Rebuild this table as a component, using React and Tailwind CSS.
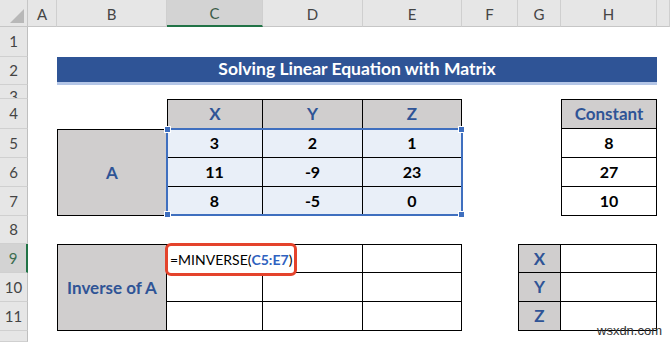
import React from "react";

const colHeads = ["A", "B", "C", "D", "E", "F", "G", "H", ""];
const rowHeads = ["1", "2", "3", "4", "5", "6", "7", "8", "9", "10", "11", ""];

const colStart = ["col-start-2", "col-start-3", "col-start-4", "col-start-5", "col-start-6", "col-start-7", "col-start-8", "col-start-9", "col-start-10"];
const rowStart = ["row-start-2", "row-start-3", "row-start-4", "row-start-5", "row-start-6", "row-start-7", "row-start-8", "row-start-9", "row-start-10", "row-start-11", "row-start-12", "row-start-13"];

const matrix = [
  ["3", "2", "1"],
  ["11", "-9", "23"],
  ["8", "-5", "0"],
];
const constants = ["8", "27", "10"];

const Handle = ({ className }) => (
  <span className={`absolute w-[7px] h-[7px] bg-[#3f6fbf] border border-white ${className}`} />
);

const App = () => {
  return (
    <div className="w-[670px] h-[342px] overflow-hidden bg-white font-['Lato','Noto_Sans',sans-serif]">
      <div className="grid grid-cols-[28px_29px_110px_96px_100px_99px_56px_43px_96px_13px] grid-rows-[27px_30px_28px_14px_30px_29px_29px_29px_28px_29px_29px_29px_11px] w-[670px] h-[342px]">
        {/* corner */}
        <div className="col-start-1 row-start-1 bg-[#e6e6e6] border-r border-b border-[#c6c6c6] flex items-end justify-end p-[3px]">
          <svg width="14" height="14" viewBox="0 0 14 14">
            <polygon points="14,0 14,14 0,14" fill="#b8b8b8" />
          </svg>
        </div>

        {/* column headers */}
        {colHeads.map((c, i) => (
          <div
            key={c + i}
            className={`${colStart[i]} row-start-1 flex items-center justify-center text-[15px] pt-[2px] ${
              c === "C"
                ? "bg-[#d3d3d3] border-b-2 border-[#217346] text-[#3c5c48]"
                : "bg-[#e6e6e6] border-b border-[#c6c6c6] text-[#444]"
            } border-r border-r-[#cfcfcf]`}
          >
            {c}
          </div>
        ))}

        {/* row headers */}
        {rowHeads.map((r, i) => (
          <div
            key={"r" + i}
            className={`col-start-1 ${rowStart[i]} flex justify-center overflow-hidden text-[15px] border-b border-[#d0d0d0] ${
              r === "3" ? "items-end leading-[14px] h-[14px]" : "items-center"
            } ${
              r === "9"
                ? "bg-[#d3d3d3] border-r-2 border-r-[#217346] text-[#3c6e50]"
                : "bg-[#e6e6e6] border-r border-r-[#bfbfbf] text-[#444]"
            }`}
          >
            <span className={r === "3" ? "translate-y-[5px]" : ""}>{r}</span>
          </div>
        ))}

        {/* title */}
        <div className="col-start-3 col-span-7 row-start-3 bg-[#2f5496] border-b-[3px] border-[#b4c6e7] flex items-center justify-center text-white font-bold text-[17.5px]">
          Solving Linear Equation with Matrix
        </div>

        {/* matrix headers */}
        {["X", "Y", "Z"].map((h, i) => (
          <div
            key={h}
            className={`${colStart[2 + i]} row-start-5 bg-[#d0cece] border-t border-r border-b border-black ${i === 0 ? "border-l" : ""} flex items-center justify-center text-[#2f5496] font-bold text-[17px]`}
          >
            {h}
          </div>
        ))}

        {/* A block */}
        <div className="col-start-3 row-start-6 row-span-3 bg-[#d0cece] border border-black flex items-center justify-center text-[#2f5496] font-bold text-[17px]">
          A
        </div>

        {/* matrix data */}
        {matrix.map((row, ri) =>
          row.map((v, ci) => (
            <div
              key={ri + "-" + ci}
              className={`${colStart[2 + ci]} ${rowStart[4 + ri]} bg-[#e9eff8] border-r border-b border-black flex items-center justify-center font-bold text-[16px] text-black`}
            >
              {v}
            </div>
          ))
        )}

        {/* selection */}
        <div className="col-start-4 col-span-3 row-start-6 row-span-3 relative -mt-px -ml-px -mr-px border-2 border-[#3f6fbf]">
          <Handle className="-top-[4px] -left-[4px]" />
          <Handle className="-top-[4px] -right-[4px]" />
          <Handle className="-bottom-[4px] -left-[4px]" />
          <Handle className="-bottom-[4px] -right-[4px]" />
        </div>

        {/* constant table */}
        <div className="col-start-9 row-start-5 bg-[#d0cece] border border-black flex items-center justify-center text-[#2f5496] font-bold text-[17px]">
          Constant
        </div>
        {constants.map((v, i) => (
          <div
            key={"c" + i}
            className={`col-start-9 ${rowStart[4 + i]} border-l border-r border-b border-black flex items-center justify-center font-bold text-[16px] text-black`}
          >
            {v}
          </div>
        ))}

        {/* inverse block */}
        <div className="col-start-3 row-start-10 row-span-3 bg-[#d0cece] border border-black flex items-center justify-center text-[#2f5496] font-bold text-[17px]">
          Inverse of A
        </div>
        {[0, 1, 2].map((ri) =>
          [0, 1, 2].map((ci) => (
            <div
              key={"i" + ri + ci}
              className={`${colStart[2 + ci]} ${rowStart[8 + ri]} border-r border-b border-black ${ri === 0 ? "border-t" : ""} relative`}
            >
              {ri === 0 && ci === 0 && (
                <div className="absolute z-10 -left-[2px] -top-[2px] w-[132px] h-[33px] border-[3px] border-[#e4432c] rounded-[6px] bg-white flex items-center pl-[2px] text-[14px] text-black whitespace-nowrap">
                  =MINVERSE(<span className="text-[#2f62c0] font-bold">C5:E7</span>)
                </div>
              )}
            </div>
          ))
        )}

        {/* XYZ table */}
        {["X", "Y", "Z"].map((h, i) => (
          <React.Fragment key={"x" + h}>
            <div
              className={`col-start-8 ${rowStart[8 + i]} bg-[#d0cece] border-l border-r border-b border-black ${i === 0 ? "border-t" : ""} flex items-center justify-center text-[#2f5496] font-bold text-[17px]`}
            >
              {h}
            </div>
            <div
              className={`col-start-9 ${rowStart[8 + i]} border-r border-b border-black ${i === 0 ? "border-t" : ""}`}
            />
          </React.Fragment>
        ))}

        {/* watermark */}
        <div className="col-start-9 col-span-2 row-start-12 row-span-2 relative">
          <span className="absolute left-[36px] top-[22px] text-[13px] leading-[13px] text-[#333] font-['Liberation_Sans',sans-serif]">
            wsxdn.com
          </span>
        </div>
      </div>
    </div>
  );
};

export default App;
